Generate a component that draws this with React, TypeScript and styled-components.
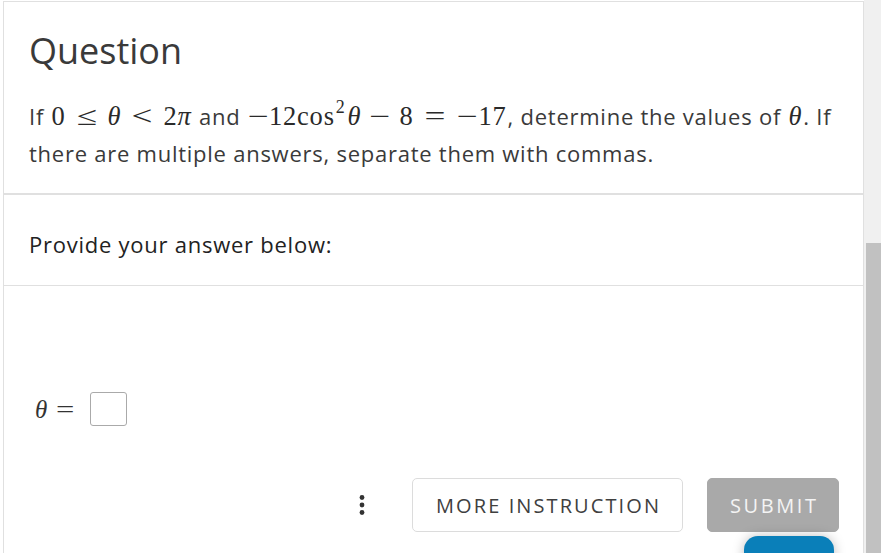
import React from "react";
import styled, { createGlobalStyle } from "styled-components";

const GlobalStyle = createGlobalStyle`
  html, body {
    margin: 0;
    padding: 0;
    background: #ffffff;
    overflow: hidden;
  }
  body {
    font-family: "Open Sans", "Noto Sans", sans-serif;
  }
`;

const Page = styled.div`
  display: flex;
  width: 881px;
  height: 553px;
  position: relative;
  overflow: hidden;
`;

const Main = styled.div`
  flex: 1;
  padding: 1px 0 0 3px;
  min-width: 0;
`;

const Card = styled.div`
  border: 1px solid #e0e0e0;
  border-bottom: none;
  background: #fff;
  height: 600px;
`;

const QuestionSection = styled.section`
  padding: 27px 25px 21px;
  border-bottom: 2px solid #e0e0e0;
`;

const Title = styled.h1`
  margin: 0 0 25px;
  font-size: 36px;
  line-height: 44px;
  font-weight: 400;
  color: #3a3a3a;
`;

const Prompt = styled.p`
  margin: 0;
  font-size: 22px;
  letter-spacing: 0.75px;
  line-height: 37px;
  color: #3a3a3a;
  white-space: nowrap;
`;

const Math = styled.span`
  font-family: "Liberation Serif", "Times New Roman", serif;
  font-size: 26.5px;
  letter-spacing: 0.8px;
  line-height: 1;
  color: #2a2a2a;
  white-space: nowrap;
  margin: 0 1px;
`;

const MVar = styled.i`
  font-style: italic;
  font-weight: 400;
`;

const Op = styled.span<{ $w: number }>`
  display: inline-block;
  width: ${(p) => p.$w}px;
  text-align: center;
  letter-spacing: 0;
  transform: scaleX(1.4);
`;

const Sup = styled.sup`
  font-size: 18px;
  line-height: 0;
  vertical-align: 12px;
  margin: 0 2px 0 1px;
`;

const InstructionSection = styled.section`
  padding: 34px 25px 26px;
  border-bottom: 1px solid #e0e0e0;
  font-size: 22px;
  letter-spacing: 0.75px;
  line-height: 30px;
  color: #222;
`;

const AnswerSection = styled.section`
  padding: 106px 24px 0 31px;
`;

const AnswerRow = styled.div`
  display: flex;
  align-items: center;
  height: 34px;
`;

const AnswerLabel = styled.span`
  font-family: "Liberation Serif", "Times New Roman", serif;
  font-size: 25px;
  color: #333;
  margin-top: 2px;
`;

const Eq = styled.span`
  display: inline-block;
  margin: 0 18px 0 11px;
  transform: scaleX(1.3);
`;

const AnswerBox = styled.span`
  display: inline-block;
  width: 35px;
  height: 32px;
  border: 1px solid #aaaaaa;
  border-radius: 3px;
`;

const Actions = styled.div`
  display: flex;
  justify-content: flex-end;
  align-items: center;
  margin-top: 52px;
`;

const MenuDots = styled.button`
  background: none;
  border: none;
  padding: 0;
  margin-right: 47px;
  display: flex;
  align-items: center;
  cursor: pointer;
`;

const Button = styled.button<{ $primary?: boolean; $spacing: number; $width: number }>`
  height: 54px;
  width: ${(p) => p.$width}px;
  box-sizing: border-box;
  border-radius: 5px;
  font-family: "Open Sans", "Noto Sans", sans-serif;
  font-size: 20px;
  letter-spacing: ${(p) => p.$spacing}px;
  text-transform: uppercase;
  padding: 0 0 0 ${(p) => p.$spacing}px;
  cursor: pointer;
  border: 1px solid ${(p) => (p.$primary ? "#a9a9a9" : "#dcdcdc")};
  background: ${(p) => (p.$primary ? "#a9a9a9" : "#ffffff")};
  color: ${(p) => (p.$primary ? "#f4f4f4" : "#404040")};
  margin-left: ${(p) => (p.$primary ? "24px" : "0")};
`;

const Scrollbar = styled.div`
  width: 17px;
  background: #f0f0f0;
  display: flex;
  flex-direction: column;
  padding-top: 243px;
  box-sizing: border-box;
  align-items: flex-end;
`;

const Thumb = styled.div`
  width: 15px;
  flex: 1;
  background: #c1c1c1;
`;

const FloatingButton = styled.div`
  position: absolute;
  left: 744px;
  top: 536px;
  width: 90px;
  height: 44px;
  border-radius: 14px;
  background: #0a7fb9;
  box-shadow: 0 0 12px rgba(0, 0, 0, 0.25);
`;

export default function App() {
  return (
    <>
      <GlobalStyle />
      <Page>
        <Main>
          <Card>
            <QuestionSection>
              <Title>Question</Title>
              <Prompt>
                If{" "}
                <Math>
                  0<Op $w={42}>≤</Op>
                  <MVar>θ</MVar>
                  <Op $w={42}>&lt;</Op>2<MVar>π</MVar>
                </Math>{" "}
                and{" "}
                <Math>
                  <Op $w={21}>−</Op>12cos<Sup>2</Sup>
                  <MVar>θ</MVar>
                  <Op $w={38}>−</Op>8<Op $w={44}>=</Op>
                  <Op $w={21}>−</Op>17
                </Math>
                , determine the values of <Math><MVar>θ</MVar></Math>. If
                <br />
                there are multiple answers, separate them with commas.
              </Prompt>
            </QuestionSection>
            <InstructionSection>Provide your answer below:</InstructionSection>
            <AnswerSection>
              <AnswerRow>
                <AnswerLabel>
                  <MVar>θ</MVar>
                  <Eq>=</Eq>
                </AnswerLabel>
                <AnswerBox />
              </AnswerRow>
              <Actions>
                <MenuDots aria-label="More options">
                  <svg width="6" height="24" viewBox="0 0 6 24">
                    <circle cx="3" cy="4.5" r="2.4" fill="#333" />
                    <circle cx="3" cy="12" r="2.4" fill="#333" />
                    <circle cx="3" cy="19.5" r="2.4" fill="#333" />
                  </svg>
                </MenuDots>
                <Button $spacing={2.1} $width={271}>More Instruction</Button>
                <Button $primary $spacing={2.6} $width={132}>Submit</Button>
              </Actions>
            </AnswerSection>
          </Card>
        </Main>
        <Scrollbar>
          <Thumb />
        </Scrollbar>
        <FloatingButton />
      </Page>
    </>
  );
}
